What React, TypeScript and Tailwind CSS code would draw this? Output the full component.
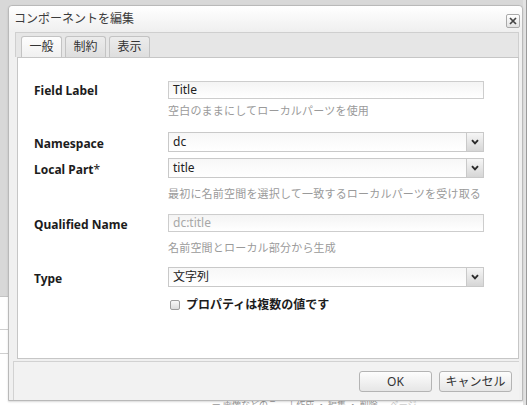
import React from "react";

function Chevron() {
  return (
    <svg width="8" height="6" viewBox="0 0 8 6">
      <path d="M1 1.2 L4 4.4 L7 1.2" stroke="#2a2a2a" strokeWidth="1.9" fill="none" />
    </svg>
  );
}

function Select({ value }: { value: string }) {
  return (
    <div className="flex h-[20px] w-[316px] border border-[#c9c9c9] bg-gradient-to-b from-[#f7f7f7] to-white">
      <div className="flex-1 pl-[4px] text-[12px] leading-[18px] text-[#222]">{value}</div>
      <div className="flex w-[17px] items-center justify-center border-l border-[#c9c9c9] bg-gradient-to-b from-[#f6f6f6] to-[#d6d6d6]">
        <Chevron />
      </div>
    </div>
  );
}

function Input({ value, disabled }: { value: string; disabled?: boolean }) {
  return (
    <div
      className={
        "h-[18px] w-[316px] border border-[#cdcdcd] bg-gradient-to-b from-[#f4f4f4] to-white pl-[4px] text-[12px] leading-[16px] " +
        (disabled ? "text-[#a8a8a8]" : "text-[#222]")
      }
    >
      {value}
    </div>
  );
}

function Label({ children }: { children: React.ReactNode }) {
  return <div className="w-[134px] pt-[3px] text-[12px] font-bold leading-[16px] text-[#1c1c1c]">{children}</div>;
}

function Hint({ children, className }: { children: React.ReactNode; className: string }) {
  return (
    <div className={"flex " + className}>
      <div className="w-[134px]" />
      <div className="text-[11px] leading-[16px] tracking-[0.2px] text-[#9a9a9a]">{children}</div>
    </div>
  );
}

function Tab({ label, active }: { label: string; active?: boolean }) {
  return (
    <div
      className={
        "flex h-[21px] w-[41px] items-center justify-center rounded-t-[3px] border border-b-0 border-[#c3c3c3] text-[12px] leading-none text-[#333] " +
        (active ? "bg-gradient-to-b from-[#fdfdfd] to-[#f0f0f0]" : "bg-gradient-to-b from-[#ececec] to-[#dedede]")
      }
    >
      {label}
    </div>
  );
}

function Button({ label }: { label: string }) {
  return (
    <div className="flex h-[21px] w-[73px] items-center justify-center rounded-[3px] border border-[#b4b4b4] bg-gradient-to-b from-[#fdfdfd] to-[#e6e6e6] text-[12px] leading-none text-[#333]">
      {label}
    </div>
  );
}

export default function App() {
  return (
    <div className="relative h-[405px] w-[527px] overflow-hidden bg-[#d8d8d8] font-['Noto_Sans','Noto_Sans_CJK_JP',sans-serif]">
      {/* background page bits */}
      <div className="absolute left-0 top-[296px] h-[109px] w-[9px] border-t border-[#c4c4c4] bg-white">
        <div className="mt-[32px] h-px w-full bg-[#cfcfcf]" />
        <div className="mt-[23px] h-px w-full bg-[#cfcfcf]" />
      </div>
      <div className="absolute left-0 top-[400px] flex h-[5px] w-[527px] items-start gap-[12px] bg-white pl-[150px] text-[9px] leading-[9px] text-[#999]">
        <span>....</span>
        <span className="pl-[40px]">ー 画像などのこ</span>
        <span>| 作成 ・ 編集 ・ 削除</span>
        <span className="text-[#ccc]">ページ</span>
      </div>
      <div className="absolute right-0 top-0 h-[405px] w-[4px] border-r border-[#9a9a9a] bg-[#e2e2e2]" />

      {/* dialog */}
      <div className="absolute left-[8px] top-[5px] flex h-[396px] w-[515px] flex-col rounded-t-[4px] border border-[#b9b9b9] bg-[#f0f0f0] shadow-[0_1px_2px_rgba(0,0,0,0.15)]">
        {/* title bar */}
        <div className="flex h-[26px] items-center justify-between rounded-t-[4px] bg-gradient-to-b from-white to-[#efefef] pl-[5px] pr-[2px]">
          <div className="text-[12px] leading-none text-[#3c3c3c]">コンポーネントを編集</div>
          <div className="mt-[4px] flex h-[14px] w-[14px] items-center justify-center rounded-[2px] border border-[#a9a9a9] bg-gradient-to-b from-white to-[#e2e2e2]">
            <svg width="8" height="8" viewBox="0 0 8 8">
              <path d="M1 1 L7 7 M7 1 L1 7" stroke="#444" strokeWidth="1.7" />
            </svg>
          </div>
        </div>

        {/* body */}
        <div className="ml-[6px] mr-[3px] flex flex-col">
          {/* tab strip */}
          <div className="flex h-[25px] items-end gap-[3px] border border-b-0 border-[#cfcfcf] bg-[#e6e6e6] pl-[5px]">
            <Tab label="一般" active />
            <Tab label="制約" />
            <Tab label="表示" />
          </div>
          {/* content panel */}
          <div className="ml-[2px] h-[302px] border border-[#c6c6c6] bg-white pl-[16px] pt-[22px]">
            <div className="flex items-center">
              <Label>Field Label</Label>
              <Input value="Title" />
            </div>
            <Hint className="mt-[4px]">空白のままにしてローカルパーツを使用</Hint>

            <div className="mt-[13px] flex items-center">
              <Label>Namespace</Label>
              <Select value="dc" />
            </div>
            <div className="mt-[6px] flex items-center">
              <Label>
                Local Part<span className="font-normal">*</span>
              </Label>
              <Select value="title" />
            </div>
            <Hint className="mt-[8px]">最初に名前空間を選択して一致するローカルパーツを受け取る</Hint>

            <div className="mt-[12px] flex items-center">
              <Label>Qualified Name</Label>
              <div className="h-[19px]">
                <Input value="dc:title" disabled />
              </div>
            </div>
            <Hint className="mt-[7px]">名前空間とローカル部分から生成</Hint>

            <div className="mt-[11px] flex items-center">
              <Label>Type</Label>
              <Select value="文字列" />
            </div>

            <div className="mt-[10px] flex items-center">
              <div className="w-[136px]" />
              <div className="h-[10px] w-[10px] rounded-[2px] border border-[#9d9d9d] bg-gradient-to-b from-[#f8f8f8] to-[#dcdcdc]" />
              <div className="ml-[6px] text-[12px] font-bold leading-[16px] text-[#1c1c1c]">プロパティは複数の値です</div>
            </div>
          </div>
        </div>

        {/* footer */}
        <div className="mt-[2px] ml-[4px] mr-[3px] flex flex-1 items-start justify-end gap-[7px] border-t border-l border-[#d2d2d2] bg-[#f2f2f2] pr-[7px] pt-[9px]">
          <Button label="OK" />
          <Button label="キャンセル" />
        </div>
      </div>
    </div>
  );
}
